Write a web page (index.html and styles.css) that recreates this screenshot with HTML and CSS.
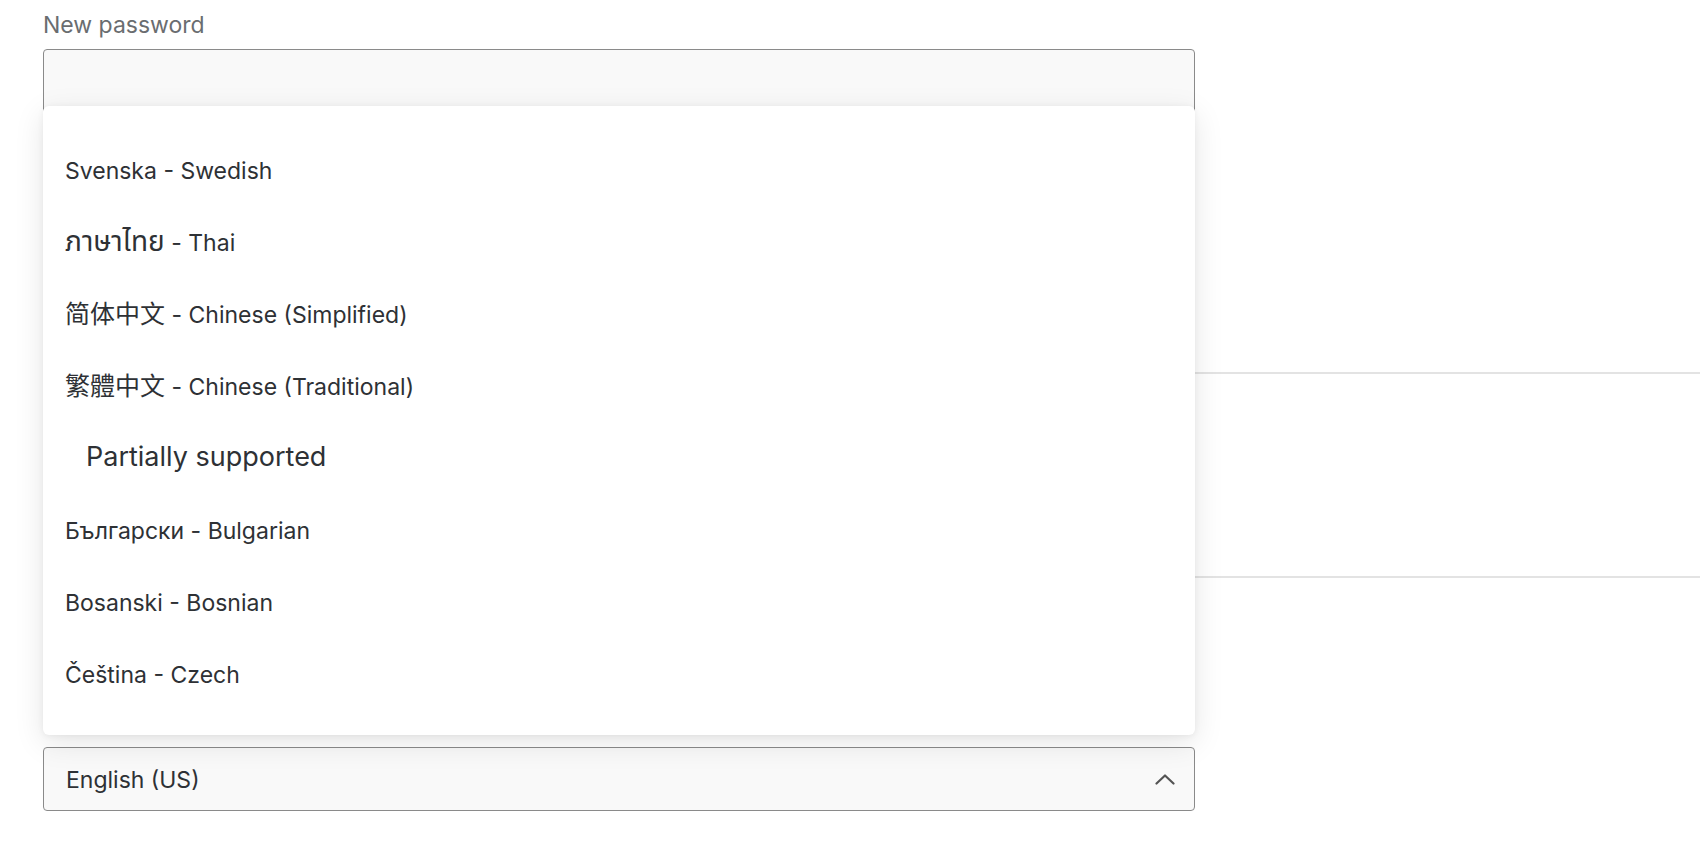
FILE: index.html
```html
<!DOCTYPE html>
<html lang="en">
<head>
<meta charset="utf-8">
<title>Account settings</title>
<link rel="stylesheet" href="styles.css">
</head>
<body>
<main class="page">
  <div class="field">
    <label class="field-label">New password</label>
    <div class="input"></div>
  </div>
  <div class="gap gap-a"></div>
  <hr class="rule">
  <div class="gap gap-b"></div>
  <hr class="rule">
  <div class="gap gap-c"></div>
  <div class="field select-field">
    <div class="select">
      <span class="select-value">English (US)</span>
      <svg class="chevron" width="20" height="11" viewBox="0 0 20 11" aria-hidden="true"><polyline points="1.5,9.5 10,1.5 18.5,9.5" fill="none" stroke="#545454" stroke-width="2.2" stroke-linecap="round" stroke-linejoin="round"/></svg>
    </div>
    <ul class="menu">
      <li class="option">Svenska - Swedish</li>
      <li class="option"><span lang="th" class="th">ภาษาไทย</span> - Thai</li>
      <li class="option"><span lang="zh-CN" class="sc">简体中文</span> - Chinese (Simplified)</li>
      <li class="option"><span lang="zh-TW" class="tc">繁體中文</span> - Chinese (Traditional)</li>
      <li class="group">Partially supported</li>
      <li class="option">Български - Bulgarian</li>
      <li class="option">Bosanski - Bosnian</li>
      <li class="option">Čeština - Czech</li>
    </ul>
  </div>
</main>
</body>
</html>
```
FILE: styles.css
```css
* { box-sizing: border-box; }
html, body { margin: 0; padding: 0; background: #ffffff; }
body {
  font-family: Inter, "Noto Sans", "Noto Sans Thai", "Noto Sans CJK SC", sans-serif;
  color: #2e3135;
}
.page {
  padding: 8px 0 0 43px;
}
.field { width: 1152px; }
.field-label {
  display: block;
  font-size: 23px;
  line-height: 34px;
  color: #6a6d70;
  margin-bottom: 7px;
}
.input {
  height: 64px;
  border: 1px solid #8a8a8a;
  border-radius: 4px;
  background: #f9f9f9;
}
.gap-a { height: 259px; }
.gap-b { height: 202px; }
.gap-c { height: 169px; }
.rule {
  margin: 0;
  border: 0;
  height: 2px;
  background: #e3e3e3;
}
.select-field { position: relative; }
.select {
  height: 64px;
  border: 1px solid #8a8a8a;
  border-radius: 4px;
  background: #f9f9f9;
  display: flex;
  align-items: center;
  justify-content: space-between;
  padding: 2px 19px 0 22px;
}
.select-value { font-size: 23px; color: #2e3135; }
.chevron { display: block; margin-top: -2px; }
.menu {
  position: absolute;
  left: 0;
  right: 0;
  bottom: calc(100% + 12px);
  margin: 0;
  padding: 29px 0 24px;
  list-style: none;
  background: #ffffff;
  border-radius: 6px;
  box-shadow: 0 8px 30px rgba(0, 0, 0, 0.10), 0 1px 6px rgba(0, 0, 0, 0.06);
}
.option {
  height: 72px;
  line-height: 72px;
  padding-left: 22px;
  font-size: 23px;
  color: #2e3135;
  overflow: hidden;
}
.group {
  height: 72px;
  line-height: 68px;
  padding-left: 43px;
  font-size: 27px;
  color: #2e3135;
}
.th { font-size: 28px; line-height: 1; }
.sc { font-family: "Noto Sans CJK SC", sans-serif; font-size: 25px; line-height: 1; }
.tc { font-family: "Noto Sans CJK TC", sans-serif; font-size: 25px; line-height: 1; }
```
